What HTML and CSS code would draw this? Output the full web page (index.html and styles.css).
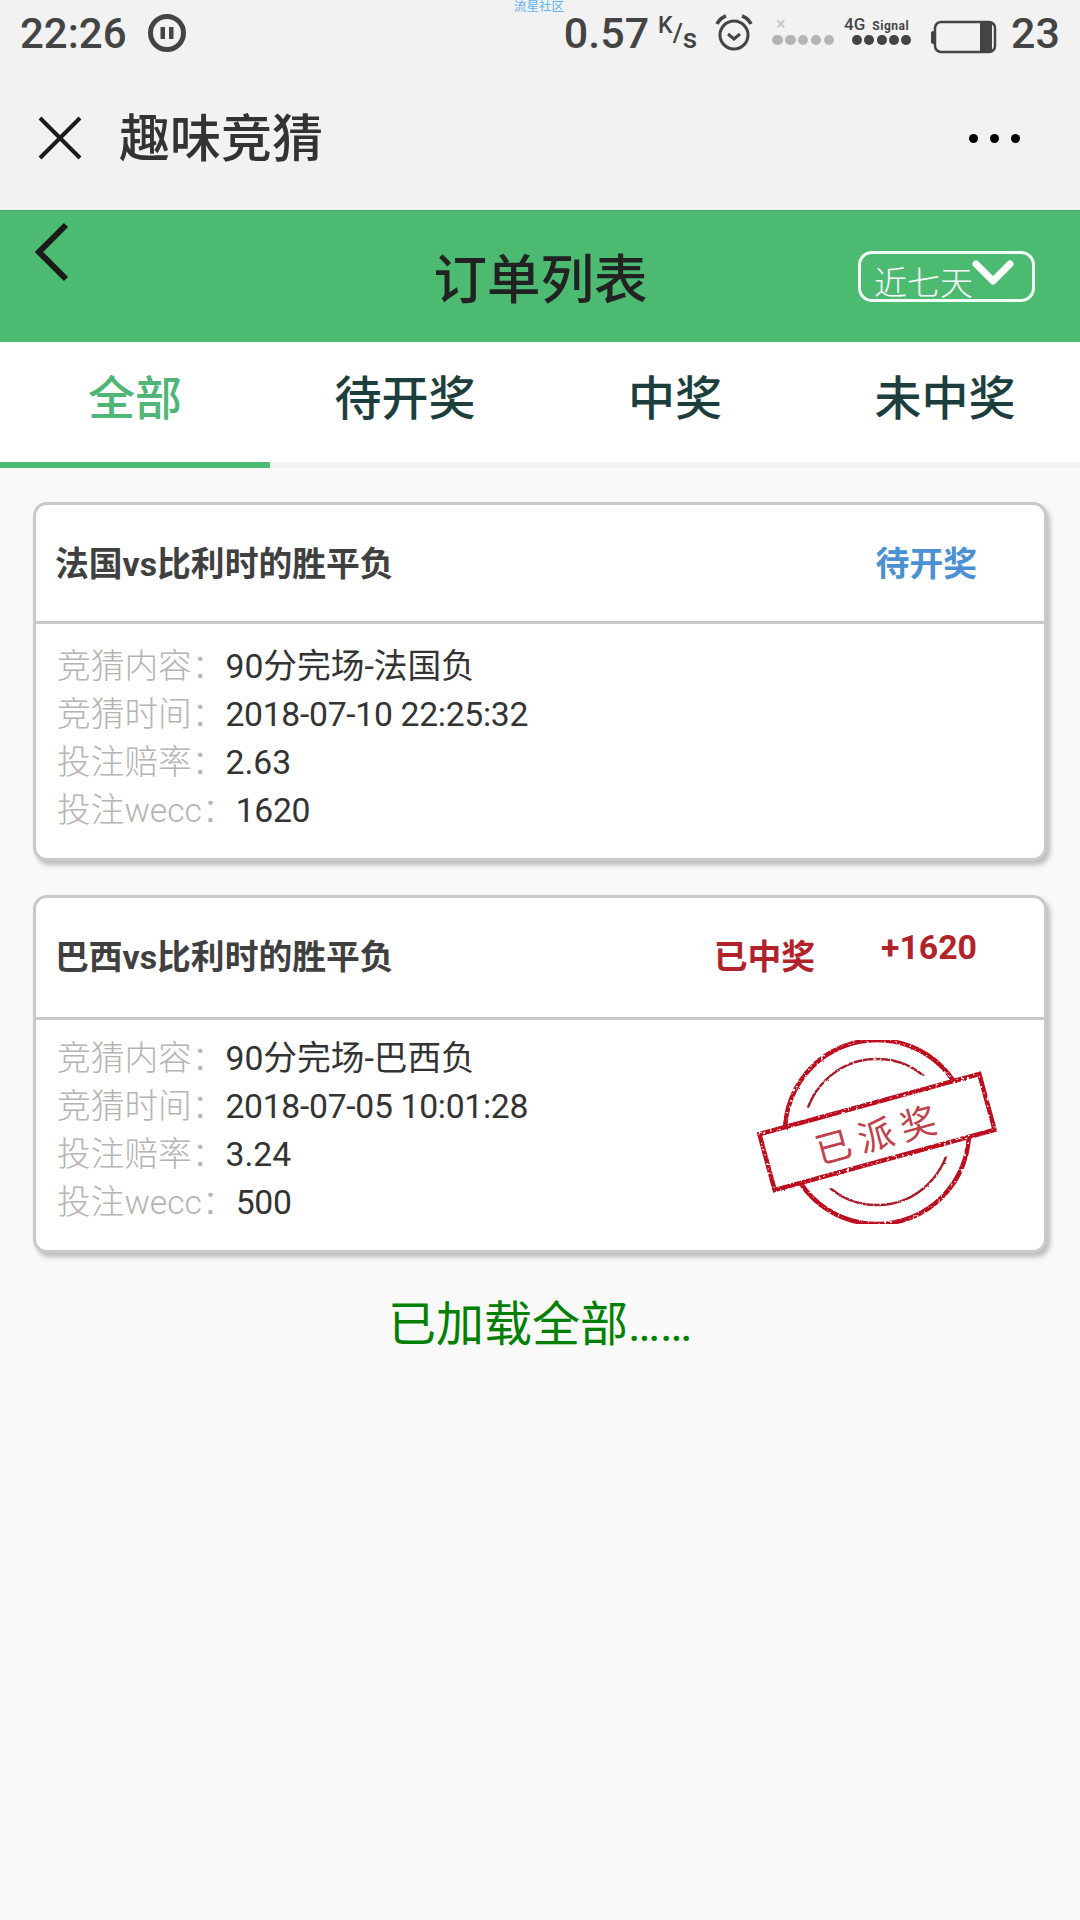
FILE: index.html
```html
<!DOCTYPE html>
<html>

<head>
    <meta charset="utf-8">
    <meta name="viewport" content="width=device-width, initial-scale=1.0">
    <title>趣味竞猜</title>
    <link rel="stylesheet" href="styles.css">
</head>

<body>
    <span class="watermark">流星社区</span>

    <div class="status-bar">
        <div class="status-left">
            <span class="clock">22:26</span>
            <svg class="pause-icon" width="38" height="38" viewBox="0 0 38 38">
                <circle cx="19" cy="19" r="16.5" fill="none" stroke="#444" stroke-width="5"/>
                <rect x="12.5" y="13" width="4.5" height="12" fill="#444"/>
                <rect x="21" y="13" width="4.5" height="12" fill="#444"/>
            </svg>
        </div>
        <div class="status-right">
            <span class="speed">0.57</span>
            <span class="speed-unit"><sup>K</sup>/<sub>s</sub></span>
            <svg class="alarm-icon" width="38" height="38" viewBox="0 0 38 38">
                <circle cx="19" cy="21" r="14" fill="none" stroke="#444" stroke-width="3"/>
                <path d="M13 20l6 5 6-5" fill="none" stroke="#444" stroke-width="3"/>
                <path d="M2 10q3-6 9-8M36 10q-3-6-9-8" fill="none" stroke="#444" stroke-width="3.5"/>
            </svg>
            <div class="sim sim-off">
                <span class="sim-label">&times;</span>
                <div class="dots"><i></i><i></i><i></i><i></i><i></i></div>
            </div>
            <div class="sim">
                <span class="sim-label"><b>4G</b><em>Signal</em></span>
                <div class="dots"><i></i><i></i><i></i><i></i><i></i></div>
            </div>
            <svg class="battery-icon" width="66" height="34" viewBox="0 0 66 34">
                <rect x="0" y="11" width="4" height="13" rx="2" fill="#444"/>
                <rect x="4" y="2" width="60" height="30" rx="6" fill="none" stroke="#444" stroke-width="2.5"/>
                <path d="M49 2h9a6 6 0 0 1 3 2v26a6 6 0 0 1-3 2h-9z" fill="#444"/>
            </svg>
            <span class="battery-level">23</span>
        </div>
    </div>

    <div class="title-bar">
        <svg class="close-icon" width="44" height="44" viewBox="0 0 44 44">
            <path d="M2 2l40 40M42 2L2 42" stroke="#1c1c1c" stroke-width="4"/>
        </svg>
        <span class="app-name">趣味竞猜</span>
        <div class="more"><i></i><i></i><i></i></div>
    </div>

    <div class="page-head">
        <svg class="back-icon" width="34" height="60" viewBox="0 0 34 60">
            <path d="M31 3L4 30l27 27" fill="none" stroke="#1a1a1a" stroke-width="6"/>
        </svg>
        <h1>订单列表</h1>
        <div class="range-select">
            <span>近七天</span>
            <svg width="42" height="26" viewBox="0 0 42 26">
                <path d="M4 4l17 17L38 4" fill="none" stroke="#fff" stroke-width="7" stroke-linecap="round" stroke-linejoin="round"/>
            </svg>
        </div>
    </div>

    <ul class="tabs">
        <li class="active">全部</li>
        <li>待开奖</li>
        <li>中奖</li>
        <li>未中奖</li>
    </ul>

    <div class="order-list">
        <div class="card">
            <div class="card-head">
                <span class="card-title">法国vs比利时的胜平负</span>
                <span class="state state-wait">待开奖</span>
            </div>
            <div class="card-body">
                <p><span class="label">竞猜内容：</span>90分完场-法国负</p>
                <p><span class="label">竞猜时间：</span><span class="num">2018-07-10 22:25:32</span></p>
                <p><span class="label">投注赔率：</span>2.63</p>
                <p><span class="label">投注wecc：</span><span class="num">1620</span></p>
            </div>
        </div>

        <div class="card card-won">
            <div class="card-head">
                <span class="card-title">巴西vs比利时的胜平负</span>
                <span class="state state-won">已中奖</span>
                <span class="state state-won state-amount">+1620</span>
            </div>
            <div class="card-body">
                <p><span class="label">竞猜内容：</span>90分完场-巴西负</p>
                <p><span class="label">竞猜时间：</span><span class="num">2018-07-05 10:01:28</span></p>
                <p><span class="label">投注赔率：</span>3.24</p>
                <p><span class="label">投注wecc：</span><span class="num">500</span></p>
            </div>
            <!-- paid-out stamp -->
            <svg class="stamp" width="260" height="240" viewBox="0 0 260 240">
                <defs>
                    <filter id="worn" x="0" y="0" width="100%" height="100%">
                        <feTurbulence type="fractalNoise" baseFrequency="0.35" numOctaves="2" seed="4" result="noise"/>
                        <feDisplacementMap in="SourceGraphic" in2="noise" scale="2" result="rough"/>
                        <feColorMatrix in="noise" type="matrix" values="0 0 0 0 0  0 0 0 0 0  0 0 0 0 0  0 0 0 -7 5.2" result="holes"/>
                        <feComposite in="rough" in2="holes" operator="in"/>
                    </filter>
                </defs>
                <g filter="url(#worn)">
                    <circle cx="130" cy="120" r="73" fill="none" stroke="#a81c2c" stroke-width="2.5"/>
                    <rect x="8" y="78" width="244" height="84" fill="#fff" transform="rotate(-15.3 130 120)"/>
                    <circle cx="130" cy="120" r="92" fill="none" stroke="#bb0a1e" stroke-width="4.5"/>
                    <rect x="16" y="91" width="228" height="58" fill="#fff" stroke="#bb0a1e" stroke-width="4.5" transform="rotate(-15.3 130 120)"/>
                </g>
                <text class="stamp-text" x="132" y="124" transform="rotate(-15.3 130 120)">已派奖</text>
            </svg>
        </div>

        <div class="loaded">已加载全部……</div>
    </div>
</body>
</html>
```

FILE: styles.css
```css
* {
    box-sizing: border-box;
}

html, body {
    margin: 0;
    padding: 0;
}

body {
    width: 1080px;
    min-height: 1920px;
    background-color: #f9f9f9;
    font-family: Roboto, "Noto Sans CJK SC", sans-serif;
    color: #333;
    position: relative;
}

.watermark {
    position: absolute;
    top: 0;
    left: 514px;
    font-size: 12.5px;
    line-height: 13px;
    color: #5cb4ec;
}

/* status bar */
.status-bar {
    height: 66px;
    padding: 0 20px;
    background-color: #f2f2f2;
    color: #444;
    display: flex;
    justify-content: space-between;
    align-items: center;
}

.status-left, .status-right {
    display: flex;
    align-items: center;
}

.clock {
    font-size: 42px;
    font-weight: 500;
}

.pause-icon {
    margin-left: 21px;
}

.speed {
    font-size: 43px;
    font-weight: 500;
}

.speed-unit {
    width: 36px;
    margin-left: 9px;
    font-size: 26px;
    font-weight: 500;
    line-height: 34px;
}

.speed-unit sup {
    font-size: 23px;
    vertical-align: 9px;
    line-height: 0;
}

.speed-unit sub {
    font-size: 28px;
    vertical-align: -6px;
    line-height: 0;
}

.alarm-icon {
    margin-left: 21px;
}

.sim {
    width: 64px;
    margin-left: 19px;
    margin-bottom: 8px;
    display: flex;
    flex-direction: column;
}

.sim + .sim {
    margin-left: 11px;
}

.sim-label {
    height: 22px;
    font-size: 12px;
    line-height: 22px;
    white-space: nowrap;
}

.sim-label b {
    margin-left: -3px;
    font-size: 17px;
    font-weight: 500;
}

.sim-label em {
    margin-left: 7px;
    font-style: normal;
    font-weight: 700;
    letter-spacing: 0.5px;
}

.sim-off .sim-label {
    padding-left: 4px;
    font-size: 18px;
    font-weight: 700;
    color: #ccc;
}

.dots {
    display: flex;
    gap: 2.4px;
}

.sim + .sim .dots {
    padding-left: 5px;
}

.dots i {
    width: 10.5px;
    height: 10.5px;
    border-radius: 50%;
    background-color: #444;
}

.sim-off .dots i {
    background-color: #b5b5b5;
}

.battery-icon {
    margin-left: 20px;
    margin-top: 8px;
}

.battery-level {
    margin-left: 14px;
    font-size: 43px;
    font-weight: 500;
}

/* app title bar */
.title-bar {
    height: 144px;
    padding: 0 60px 6px 38px;
    background-color: #f2f2f2;
    display: flex;
    align-items: center;
}

.close-icon {
    flex: none;
    margin-top: 6px;
}

.app-name {
    flex: 1;
    margin-left: 37px;
    font-size: 51px;
    font-weight: 500;
}

.more {
    display: flex;
    gap: 12px;
    margin-top: 6px;
}

.more i {
    width: 9px;
    height: 9px;
    border-radius: 50%;
    background-color: #000;
}

/* green page header */
.page-head {
    height: 132px;
    padding: 0 45px;
    background-color: #4dba72;
    border-top: 1px solid #46a869;
    display: grid;
    grid-template-columns: 1fr auto 1fr;
    align-items: center;
}

.back-icon {
    align-self: start;
    margin-top: 11px;
    margin-left: -10px;
}

h1 {
    margin: 0 0 2px 1px;
    font-size: 53.5px;
    font-weight: 500;
    color: #222;
}

.range-select {
    justify-self: end;
    width: 177px;
    height: 51px;
    padding-left: 13px;
    border: 3px solid #f4fbf6;
    border-radius: 14px;
    color: #fff;
    display: flex;
    align-items: flex-start;
    white-space: nowrap;
}

.range-select span {
    font-size: 33px;
    font-weight: 300;
    line-height: 48px;
    margin-top: 6px;
    height: 40px;
}

.range-select svg {
    margin-left: -1px;
    margin-top: 6px;
}

/* tabs */
.tabs {
    list-style-type: none;
    margin: 0;
    padding: 0;
    height: 126px;
    background-color: #fff;
    border-bottom: 6px solid #f2f2f2;
    display: flex;
}

.tabs li {
    flex: 1;
    height: 126px;
    padding-top: 23px;
    border-bottom: 6px solid transparent;
    text-align: center;
    font-size: 47px;
    font-weight: 500;
    line-height: 68px;
    color: #1c3e3c;
}

.tabs li.active {
    color: #4fb677;
    border-bottom-color: #4dba72;
}

/* order cards */
.order-list {
    padding: 34px 33px 0 33px;
}

.card {
    position: relative;
    margin-bottom: 34px;
    background-color: #fff;
    border: 3px solid #c9c9c9;
    border-radius: 14px;
    box-shadow: 3px 4px 5px rgba(0, 0, 0, 0.25);
}

.card-head {
    height: 119px;
    padding: 0 67px 4px 19px;
    border-bottom: 3px solid #c9c9c9;
    display: flex;
    align-items: center;
}

.card-won .card-head {
    height: 122px;
    padding-bottom: 6px;
}

.card-title {
    flex: 1;
    font-size: 33.8px;
    font-weight: 700;
    color: #404040;
}

.state {
    font-size: 33.8px;
    font-weight: 700;
}

.state-wait {
    color: #4a90d2;
}

.state-won {
    color: #b0232a;
}

.state-amount {
    margin-left: 66px;
    margin-top: -15px;
}

.card-body {
    padding: 19px 0 0 21px;
    height: 234px;
}

.card-won .card-body {
    height: 230px;
    padding-top: 15px;
}

.card-body p {
    margin: 0;
    font-size: 33.7px;
    line-height: 48px;
    font-weight: 400;
    color: #333;
}

.num {
    letter-spacing: -0.3px;
}

.label {
    font-weight: 300;
    letter-spacing: 0;
    color: #b4b4b4;
}

.stamp {
    position: absolute;
    left: 711px;
    top: 114px;
}

.stamp-text {
    font-size: 36px;
    font-weight: 400;
    fill: #c0404c;
    letter-spacing: 8px;
    text-anchor: middle;
    dominant-baseline: central;
}

.loaded {
    margin-top: 37px;
    text-align: center;
    font-size: 48px;
    line-height: 70px;
    color: #008000;
}
```
